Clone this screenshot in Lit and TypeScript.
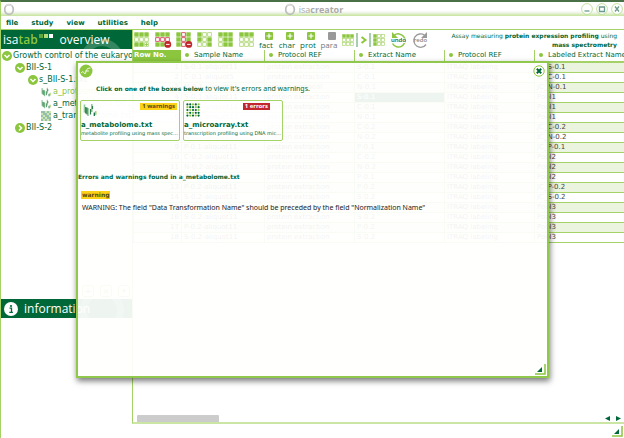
import { LitElement, html, svg, css } from "lit";
import { customElement, property } from "lit/decorators.js";

const LIME = "#8cc63f";
const DARK = "#006838";

type Kind = "metabolome" | "microarray";

/** 3x3 cell icon: "g" filled, "o" outlined, "r" outlined in red. */
const cells = (rows: string) =>
  rows.split("").map((c, i) => {
    const x = (i % 3) * 5;
    const y = Math.floor(i / 3) * 5;
    if (c === "g") return svg`<rect x=${x + 0.3} y=${y + 0.3} width="4.4" height="4.4" fill=${LIME}/>`;
    return svg`<rect x=${x + 0.7} y=${y + 0.7} width="3.6" height="3.6" fill="#fff" stroke=${c === "r" ? "#d0344a" : "#a9d46c"} stroke-width=".8"/>`;
  });

const gridIcon = (rows: string, badge: "none" | "minus" | "plus" = "none") => html`
  <svg class="grid-icon" viewBox="0 0 17 16" aria-hidden="true">
    ${cells(rows)}
    ${badge === "minus"
      ? svg`<circle cx="12.8" cy="12.4" r="3.4" fill="#c1272d"/><path d="M11 12.4h3.600" stroke="#fff" stroke-width="1"/>`
      : ""}
    ${badge === "plus" ? svg`<path d="M11 12.5h3M12.5 11v3" stroke=${LIME} stroke-width=".8"/>` : ""}
  </svg>`;

const smallGrid = (rows: string) => html`
  <svg class="small-grid" viewBox="0 0 15 15" aria-hidden="true">${cells(rows)}</svg>`;

const metabolomeIcon = html`
  <svg class="kind" viewBox="0 0 14 14" aria-hidden="true">
    <path d="M1.5 1.5v8M5 5v8M8.8 1v8" stroke="#8fc79a" stroke-width="1.6"/>
    <path d="M2.7 4v6.5M4 4.5v7M7.5 6v5.500M9.5 3v3" stroke="#2c7d45" stroke-width="1.2"/>
    <path d="M11.300 9.500v3.500" stroke=${DARK} stroke-width="1.2"/>
    <path d="M12.800 8v4" stroke="#8cc63f" stroke-width="1.2"/>
  </svg>`;

const microarrayIcon = html`
  <svg class="kind" viewBox="0 0 14 14" aria-hidden="true">
    ${Array.from({ length: 25 }, (_, i) => {
      const c = i % 5;
      const r = Math.floor(i / 5);
      return svg`<circle cx=${1.4 + c * 2.8} cy=${1.4 + r * 2.8} r="1.1" fill=${(c * 2 + r * 3) % 5 < 3 ? DARK : LIME}/>`;
    })}
  </svg>`;

const kindIcon = (k: Kind) => (k === "metabolome" ? metabolomeIcon : microarrayIcon);

const chevron = (open: boolean) => html`
  <svg class="chevron" viewBox="0 0 10 10" aria-hidden="true">
    <circle cx="5" cy="5" r="5" fill=${LIME}/>
    <path d=${open ? "M2.500 4l2.500 2.500L7.500 4" : "M4 2.500l2.500 2.500L4 7.500"} fill="none" stroke="#fff" stroke-width="1.500"/>
  </svg>`;

const ringLogo = html`
  <svg class="ring" viewBox="0 0 12 13" aria-hidden="true">
    <ellipse cx="6" cy="6.500" rx="4.300" ry="4.900" fill="none" stroke="#bdbdbd" stroke-width="1.700"/>
    <path d="M3 2.500Q6 .5 9 3" fill="none" stroke="#dedede" stroke-width="1.400"/>
  </svg>`;

const gripIcon = html`
  <svg class="grip" viewBox="0 0 11 11" aria-hidden="true">
    <path d="M7 3v5H2z" fill="${DARK}"/>
    <path d="M10 0v10H0" fill="none" stroke="${LIME}" stroke-width="1.500"/>
  </svg>`;

const SAMPLES = ["S-0.1", "C-0.1", "N-0.1", "S-0.1", "C-0.1", "N-0.1", "C-0.2", "N-0.2", "P-0.1",
  "C-0.2", "N-0.2", "P-0.1", "P-0.2", "S-0.2", "N-0.2", "S-0.2", "P-0.2", "S-0.2"];
const LABELED = ["JC_S-0.1", "JC_C-0.1", "JC_N-0.1", "Pool1", "Pool1", "Pool1", "JC_C-0.2", "JC_N-0.2", "JC_P-0.1",
  "Pool2", "Pool2", "Pool2", "JC_P-0.2", "JC_S-0.2", "Pool3", "Pool3", "Pool3", "Pool3"];

@customElement("assay-table")
export class AssayTable extends LitElement {
  static styles = css`
    :host { display: block; overflow: hidden; }
    table { width: 100%; border-collapse: separate; border-spacing: 0; table-layout: fixed; font: 7px/9px "DejaVu Sans", sans-serif; color: #444; }
    .c-row { width: 48px; }
    .c-sample { width: 83px; }
    .c-mid { width: 90px; }
    th { height: 11px; padding: 0 0 0 4px; text-align: left; font-weight: 400; line-height: 11px; color: #006838; white-space: nowrap; border-bottom: 2px solid #a5d266; border-left: 1px solid #a5d266; }
    th.first { padding-left: 0; background: #8cc63f; color: #fff; font-weight: 700; border-left-color: #8cc63f; }
    th.second { padding-left: 3px; border-left-color: transparent; }
    .dot { display: inline-block; width: 4px; height: 4px; margin-right: 5px; border-radius: 50%; background: #8cc63f; vertical-align: middle; }
    td { height: 9px; padding: 0 2px; white-space: nowrap; overflow: hidden; border-bottom: 1px solid #a5d266; border-left: 1px solid #a5d266; }
    td.num { text-align: right; }
    tr.odd td { background: #ebf4df; }
    tr td.selected { background: #006838; color: #fff; }
  `;
  render() {
    const head = ["Sample Name", "Protocol REF", "Extract Name", "Protocol REF", "Labeled Extract Name"];
    return html`<table>
      <colgroup><col class="c-row"><col class="c-sample"><col class="c-mid"><col class="c-mid"><col class="c-mid"><col></colgroup>
      <thead><tr>
        <th class="first" scope="col">Row No.</th>
        ${head.map((h, i) => html`<th class=${i === 0 ? "second" : ""} scope="col"><span class="dot"></span>${h}</th>`)}
      </tr></thead>
      <tbody>${SAMPLES.map((s, i) => html`<tr class=${i % 2 === 0 ? "odd" : ""}>
        <td class="num">${i + 1}</td>
        <td>${s}-aliquot${i === 1 ? "5" : "11"}</td>
        <td>${i === 2 ? "growth protocol" : "protein extraction"}</td>
        <td class=${i === 3 ? "selected" : ""}>${s}</td>
        <td>ITRAQ labeling</td>
        <td>${LABELED[i]}</td>
      </tr>`)}</tbody>
    </table>`;
  }
}

@customElement("tool-bar")
export class ToolBar extends LitElement {
  static styles = css`
    :host { display: flex; align-items: center; padding: 0 7px 0 1px; color: #006838; }
    button { display: block; flex: none; margin: 0; padding: 0; border: 0; background: none; color: inherit; }
    .grids, .adders, .moves, .history { display: flex; flex: none; align-items: center; }
    .grids { gap: 4px; }
    .grid-icon { display: block; width: 17px; height: 16px; }
    .adders { gap: 5px; margin-left: 2px; }
    .adder { display: flex; flex-direction: column; align-items: flex-end; width: 16px; font: 8px/9px "Open Sans", sans-serif; }
    .adder span { align-self: center; }
    .adder svg { width: 8px; height: 8px; margin-right: 1px; }
    .adder.off { color: #777; }
    .moves { gap: 2px; margin-left: 5px; }
    .small-grid { display: block; width: 12px; height: 12px; }
    .next { display: block; width: 15px; height: 14px; }
    .history { gap: 5px; margin-left: 5px; }
    .history svg { display: block; width: 17px; height: 17px; }
    .turn { position: relative; width: 17px; }
    .turn span { position: absolute; inset: 4px 0 auto 0; display: flex; justify-content: center; font: 600 6px/9px "Open Sans", sans-serif; }
    .turn.off { color: #888; }
    .assay { flex: 1; min-width: 0; margin: 0; text-align: right; font: 6px/9px "DejaVu Sans", sans-serif; }
  `;
  render() {
    const adder = (label: string, off = false) => html`<button class="adder ${off ? "off" : ""}" ?disabled=${off}>
      <svg viewBox="0 0 8 8" aria-hidden="true"><rect width="8" height="8" rx="1" fill=${off ? "#999" : LIME}/>
      ${off ? "" : svg`<path d="M4 1.500v5M1.500 4h5" stroke="#fff" stroke-width="1.200"/>`}</svg>
      <span>${label}</span></button>`;
    return html`
      <div class="grids">
        <button aria-label="Add row">${gridIcon("gggoooggo", "plus")}</button>
        <button aria-label="Delete row">${gridIcon("gggrrrggg", "minus")}</button>
        <button aria-label="Delete column">${gridIcon("grggrggrg", "minus")}</button>
        <button aria-label="Copy column down">${gridIcon("googogoog")}</button>
        <button aria-label="Copy row down">${gridIcon("gggoggogg")}</button>
        <button aria-label="Copy rows down">${gridIcon("gggoooooo")}</button>
      </div>
      <div class="adders">${adder("fact")}${adder("char")}${adder("prot")}${adder("para", true)}</div>
      <div class="moves">
        <button aria-label="Sort">${smallGrid("gggoooooo")}</button>
        <button aria-label="Transpose"><svg class="next" viewBox="0 0 15 14" aria-hidden="true">
          <path d="M1 0v14M14 0v14" stroke="#4f9f5a" stroke-width="1"/>
          <path d="M5.500 4l4 3-4 3" fill="none" stroke=${LIME} stroke-width="2"/></svg></button>
        <button aria-label="Columns">${smallGrid("googoogoo")}</button>
      </div>
      <div class="history">
        <button class="turn"><svg viewBox="0 0 17 17" aria-hidden="true">
          <path d="M4 3.500a6.600 6.600 0 1 1-1.500 8" fill="none" stroke=${LIME} stroke-width="1.500"/>
          <path d="M2 0v6h6z" fill=${LIME}/><rect y="6.500" width="15" height="4.500" fill="#fff"/></svg><span>undo</span></button>
        <button class="turn off" disabled><svg viewBox="0 0 17 17" aria-hidden="true">
          <path d="M12.500 3.200A6.700 6.700 0 1 0 14 12.500" fill="none" stroke="#999" stroke-width="1.300"/>
          <path d="M15 0v6H9z" fill="#999"/><rect x="3" y="6.500" width="14" height="4.500" fill="#fff"/></svg><span>redo</span></button>
      </div>
      <p class="assay">Assay measuring <b>protein expression profiling</b> using<br><b>mass spectrometry</b></p>`;
  }
}

@customElement("side-bar")
export class SideBar extends LitElement {
  static styles = css`
    :host { display: flex; flex-direction: column; color: #006838; }
    h2 { position: relative; flex: none; display: flex; align-items: center; margin: 0; height: 19px; background: #006838; color: #fff; font: 12px/18px "Open Sans", sans-serif; overflow: hidden; }
    .swirl { position: absolute; right: 8px; top: 9px; width: 44px; height: 44px; border: 7px solid #ffffff33; border-radius: 50%; box-sizing: border-box; }
    .swirl.low { top: -10px; }
    .brand { padding-left: 2px; }
    .brand b { font-weight: 600; color: #8cc63f; }
    .squares { display: flex; gap: 1px; align-self: flex-start; margin: 4px 7px 0 1px; }
    .squares i { width: 4px; height: 4px; background: #5fa93c; }
    .squares i:nth-child(2) { background: #b5dc7a; }
    .squares i:nth-child(3) { background: #fff; }
    .tree { flex: none; height: 236px; margin: 0; padding: 1px 0 0 1px; box-sizing: border-box; list-style: none; overflow: hidden; font: 8px/12px "DejaVu Sans", sans-serif; }
    .tree li { display: flex; align-items: center; gap: 1px; height: 12px; white-space: nowrap; }
    .l1 { padding-left: 13px; }
    .l2 { padding-left: 26px; }
    .l3 { padding-left: 39px; }
    .active { color: #8cc63f; }
    .chevron, .kind { width: 10px; height: 10px; flex: none; }
    .l3 span { padding-left: 1px; }
    .actions { flex: none; display: flex; justify-content: flex-end; gap: 6px; height: 14px; padding: 0 2px; }
    .actions button { width: 12px; height: 12px; padding: 0; border: 1px solid #a5d266; border-radius: 2px; background: #fff; color: #8cc63f; font: 700 9px/9px "DejaVu Sans", sans-serif; }
    .info { gap: 6px; padding-left: 3px; }
    .info svg { width: 14px; height: 14px; }
  `;
  render() {
    return html`
      <h2><span class="brand">isa<b>tab</b></span><span class="squares"><i></i><i></i><i></i></span><span>overview</span><span class="swirl"></span></h2>
      <ul class="tree">
        <li>${chevron(true)}<span>Growth control of the eukaryote</span></li>
        <li class="l1">${chevron(true)}<span>BII-S-1</span></li>
        <li class="l2">${chevron(true)}<span>s_BII-S-1.txt</span></li>
        <li class="l3 active">${kindIcon("metabolome")}<span>a_proteome.txt</span></li>
        <li class="l3">${kindIcon("metabolome")}<span>a_metabolome.txt</span></li>
        <li class="l3">${kindIcon("microarray")}<span>a_transcriptome.txt</span></li>
        <li class="l1">${chevron(false)}<span>BII-S-2</span></li>
      </ul>
      <div class="actions"><button aria-label="Add">+</button><button aria-label="Remove">×</button><button aria-label="Group">•</button></div>
      <h2 class="info"><svg viewBox="0 0 14 14" aria-hidden="true"><circle cx="7" cy="7" r="7" fill="#fff"/>
        <circle cx="7" cy="4" r="1.100" fill=${DARK}/><path d="M5.500 6.200h2v4M5.300 10.300h3.600" fill="none" stroke=${DARK} stroke-width="1.300"/></svg>
        <span>information</span><span class="swirl low"></span></h2>`;
  }
}

@customElement("file-card")
export class FileCard extends LitElement {
  @property() name = "";
  @property() summary = "";
  @property() kind: Kind = "metabolome";
  @property() tag = "";
  static styles = css`
    :host { display: block; width: 100px; }
    button { display: flex; flex-direction: column; width: 100%; height: 41px; margin: 0; padding: 2px 0; box-sizing: border-box; border: 1px solid #a5d266; border-radius: 2px; background: #ffffffaa; color: #006838; text-align: left; }
    .top { display: flex; justify-content: space-between; align-items: flex-start; align-self: stretch; height: 18px; padding: 0 2px; }
    .kind { width: 14px; height: 14px; }
    .tag { padding: 0 2px; font: 700 6px/7px "Noto Sans", sans-serif; }
    .metabolome { background: #fcd116; color: #574a10; }
    .microarray { margin-right: 10px; background: #c1272d; color: #fff; }
    .name { font: 700 7px/9px "DejaVu Sans", sans-serif; }
    .summary { align-self: stretch; overflow: hidden; text-overflow: ellipsis; white-space: nowrap; font: 5px/7px "DejaVu Sans", sans-serif; }
  `;
  render() {
    return html`<button>
      <span class="top">${kindIcon(this.kind)}<span class="tag ${this.kind}">${this.tag}</span></span>
      <span class="name">${this.name}</span><span class="summary">${this.summary}</span>
    </button>`;
  }
}

@customElement("error-dialog")
export class ErrorDialog extends LitElement {
  static styles = css`
    :host { display: flex; flex-direction: column; box-sizing: border-box; border: 2px solid #8fc84a; background: #fffffeee; box-shadow: 1px 3px 6px #0008; font: 7px/10px "Noto Sans", sans-serif; color: #006838; }
    .head { display: flex; justify-content: space-between; padding: 1px 1px 0; }
    .leaf { width: 14px; height: 14px; }
    .close { width: 12px; height: 12px; margin: 1px; padding: 0; border: 0; background: none; }
    .close svg { display: block; }
    .hint { margin: 6px 0 6px 18px; }
    b, dt { font: 700 6px/10px "DejaVu Sans", sans-serif; }
    .cards { display: flex; gap: 3px; margin-left: 2px; }
    h3 { margin: 31px 0 9px; font: 700 6px/10px "DejaVu Sans", sans-serif; }
    .list { margin: 0; padding-left: 3px; }
    dt { width: fit-content; padding: 0 1px; line-height: 8px; background: #fcd116; color: #574a10; }
    dd { margin: 4px 0 0 1px; color: #222; }
    .foot { display: flex; justify-content: flex-end; margin-top: auto; padding: 0 1px 1px; }
    .grip { width: 11px; height: 11px; }
  `;
  render() {
    return html`
      <div class="head">
        <svg class="leaf" viewBox="0 0 14 14" aria-hidden="true"><circle cx="7" cy="7" r="6.500" fill=${LIME}/>
          <path d="M2 9l2-1.500L6 10l2.500-5.500 3-.500M6 7h4" fill="none" stroke="#e9f5d8" stroke-width="1"/></svg>
        <button class="close" aria-label="Close"><svg viewBox="0 0 12 12" aria-hidden="true"><circle cx="6" cy="6" r="5.200" fill="#fff" stroke=${LIME}/>
          <path d="M3.800 3.800l4.400 4.400M8.200 3.800L3.800 8.200" stroke=${DARK} stroke-width="2"/></svg></button>
      </div>
      <p class="hint"><b>Click on one of the boxes below</b> to view it's errors and warnings.</p>
      <div class="cards">
        <file-card name="a_metabolome.txt" summary="metabolite profiling using mass spectrometry" kind="metabolome" tag="1 warnings"></file-card>
        <file-card name="a_microarray.txt" summary="transcription profiling using DNA microarray" kind="microarray" tag="1 errors"></file-card>
      </div>
      <h3>Errors and warnings found in a_metabolome.txt</h3>
      <dl class="list"><dt>warning</dt>
        <dd>WARNING: The field "Data Transformation Name" should be preceded by the field "Normalization Name"</dd></dl>
      <div class="foot">${gripIcon}</div>`;
  }
}

@customElement("app-root")
export class AppRoot extends LitElement {
  static styles = css`
    :host { position: relative; display: flex; flex-direction: column; min-height: 100vh; box-sizing: border-box; background: #fff; border-top: 2px solid #4a7048; border-left: 1px solid #a5d266; overflow: hidden; font-family: "DejaVu Sans", sans-serif; color: #006838; }
    .title { display: grid; grid-template-columns: 1fr auto 1fr; align-items: center; height: 14px; background: linear-gradient(#fff 60%, #f0f5ea 75%, #c5e39b); }
    .ring { display: block; width: 12px; height: 13px; margin-left: 2px; }
    .product { display: flex; align-items: center; gap: 3px; font: 9px/13px "Open Sans", sans-serif; color: #aaa; }
    .controls { display: flex; justify-content: flex-end; gap: 3px; padding-right: 1px; }
    .controls button { width: 12px; height: 12px; padding: 0; border: 0; background: none; }
    .controls svg { display: block; }
    .menu { display: flex; gap: 13px; height: 13px; padding-left: 5px; border-bottom: 1px solid #a5d266; }
    .menu button { padding: 0; border: 0; background: none; color: #006838; font: 700 7px/15px "DejaVu Sans", sans-serif; }
    .body { flex: 1; display: grid; grid-template-columns: 131px minmax(0, 1fr); }
    .main { display: flex; flex-direction: column; border-left: 1px solid #a5d266; border-bottom: 2px solid #cbe5a5; }
    tool-bar { flex: none; height: 20px; }
    .scroll { display: flex; align-items: flex-end; justify-content: space-between; margin-top: auto; padding: 0 3px 0 4px; }
    .thumb { width: 17%; height: 7px; border-radius: 1px 1px 0 0; background: #ccc; }
    .arrows { display: flex; gap: 6px; }
    .arrows button { width: 5px; height: 8px; padding: 0; border: 0; background: none; }
    .arrows svg { display: block; width: 5px; height: 5px; }
    .foot { display: flex; justify-content: flex-end; height: 13px; align-items: flex-end; padding: 0 1px 1px; }
    .grip { width: 11px; height: 11px; }
    error-dialog { position: absolute; inset: 59px 75px 60px 75px; }
  `;
  render() {
    const control = (label: string, d: string) => html`<button aria-label=${label}><svg viewBox="0 0 12 12" aria-hidden="true">
      <circle cx="6" cy="6" r="5.400" fill="#fff" stroke="#b5d98a" stroke-width=".8"/><path d=${d} fill="none" stroke="#6b9b8c" stroke-width="1.300"/></svg></button>`;
    return html`
      <header class="title">
        <div>${ringLogo}</div>
        <div class="product">${ringLogo}<span>isa<b>creator</b></span></div>
        <div class="controls">${control("Minimize", "M3.500 8h5")}${control("Maximize", "M3.500 4h5v4.500h-5z")}${control("Close", "M4 3.500l4 5M8 3.500l-4 5")}</div>
      </header>
      <nav class="menu">${["file", "study", "view", "utilities", "help"].map((m) => html`<button>${m}</button>`)}</nav>
      <div class="body">
        <side-bar></side-bar>
        <section class="main">
          <tool-bar></tool-bar>
          <assay-table></assay-table>
          <div class="scroll"><div class="thumb"></div>
            <div class="arrows"><button aria-label="Scroll left"><svg viewBox="0 0 5 5"><path d="M5 0v5L0 2.500z" fill=${DARK}/></svg></button>
            <button aria-label="Scroll right"><svg viewBox="0 0 5 5"><path d="M0 0v5l5-2.500z" fill=${DARK}/></svg></button></div>
          </div>
        </section>
      </div>
      <div class="foot">${gripIcon}</div>
      <error-dialog role="dialog" aria-label="Errors and warnings"></error-dialog>`;
  }
}
